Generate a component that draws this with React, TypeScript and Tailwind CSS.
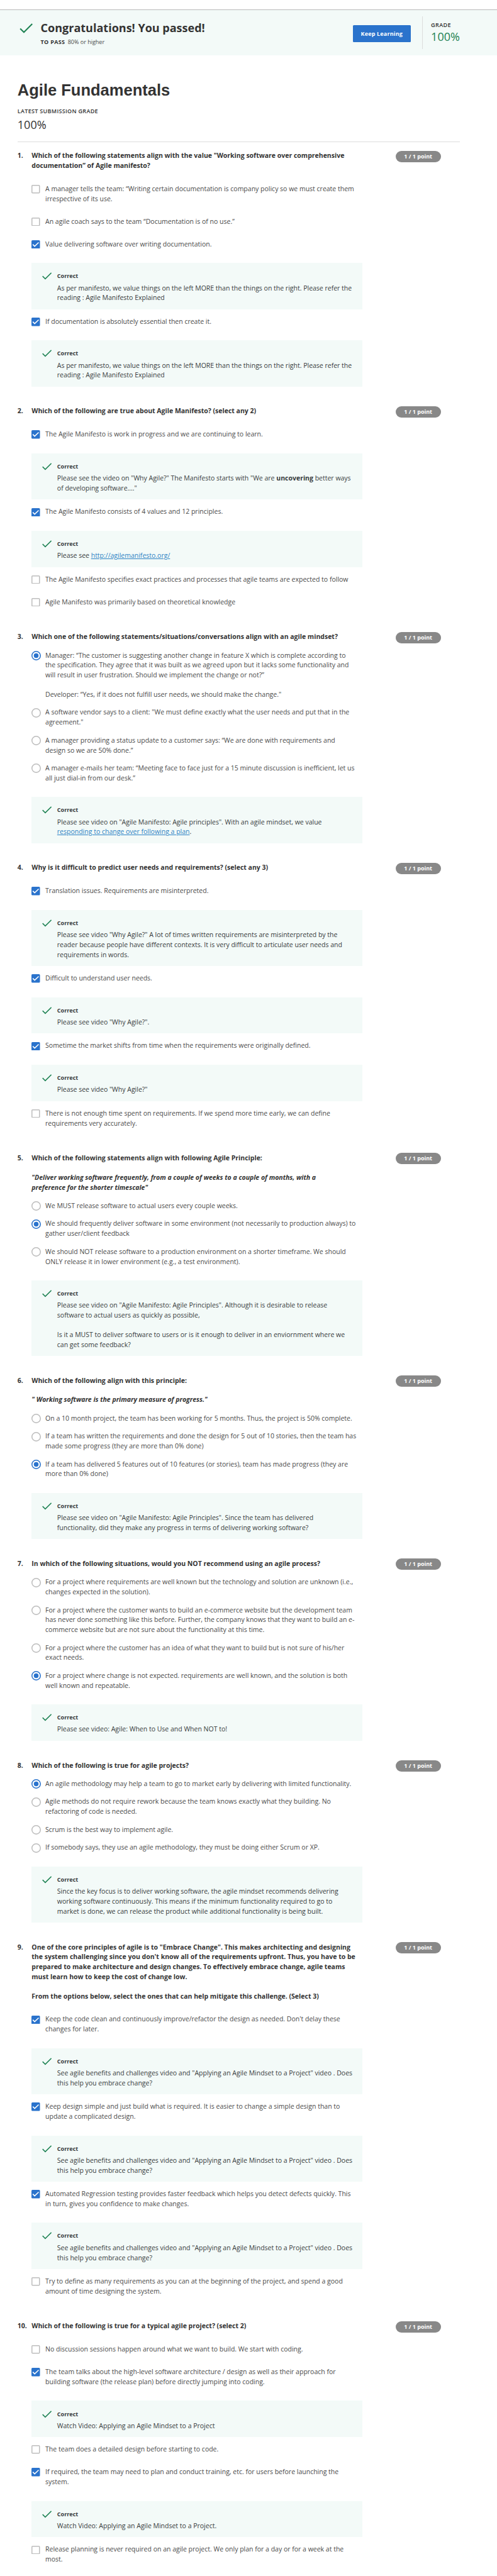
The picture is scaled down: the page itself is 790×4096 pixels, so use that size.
import React from "react";

type Option = {
  text: React.ReactNode;
  checked?: boolean;
  feedback?: React.ReactNode;
};

type Question = {
  kind: "checkbox" | "radio";
  title: React.ReactNode;
  options: Option[];
  feedback?: React.ReactNode;
};

const questions: Question[] = [
  {
    kind: "checkbox",
    title: 'Which of the following statements align with the value "Working software over comprehensive\ndocumentation” of Agile manifesto?',
    options: [
      { text: "A manager tells the team: “Writing certain documentation is company policy so we must create them\nirrespective of its use." },
      { text: "An agile coach says to the team “Documentation is of no use.”" },
      {
        text: "Value delivering software over writing documentation.",
        checked: true,
        feedback: "As per manifesto, we value things on the left MORE than the things on the right. Please refer the\nreading : Agile Manifesto Explained",
      },
      {
        text: "If documentation is absolutely essential then create it.",
        checked: true,
        feedback: "As per manifesto, we value things on the left MORE than the things on the right. Please refer the\nreading : Agile Manifesto Explained",
      },
    ],
  },
  {
    kind: "checkbox",
    title: "Which of the following are true about Agile Manifesto? (select any 2)",
    options: [
      {
        text: "The Agile Manifesto is work in progress and we are continuing to learn.",
        checked: true,
        feedback: (
          <>
            <p>
              {'Please see the video on "Why Agile?" The Manifesto starts with "We are '}
              <strong className="font-bold">uncovering</strong>
              {" better ways"}
            </p>
            <p>{'of developing software...."'}</p>
          </>
        ),
      },
      {
        text: "The Agile Manifesto consists of 4 values and 12 principles.",
        checked: true,
        feedback: (
          <>
            {"Please see "}
            <Link>http://agilemanifesto.org/</Link>
          </>
        ),
      },
      { text: "The Agile Manifesto specifies exact practices and processes that agile teams are expected to follow" },
      { text: "Agile Manifesto was primarily based on theoretical knowledge" },
    ],
  },
  {
    kind: "radio",
    title: "Which one of the following statements/situations/conversations align with an agile mindset?",
    options: [
      {
        text: (
          <>
            <p>{"Manager: “The customer is suggesting another change in feature X which is complete according to\nthe specification. They agree that it was built as we agreed upon but it lacks some functionality and\nwill result in user frustration. Should we implement the change or not?”"}</p>
            <p className="mt-[20px]">{'Developer: “Yes, if it does not fulfill user needs, we should make the change."'}</p>
          </>
        ),
        checked: true,
      },
      { text: 'A software vendor says to a client: "We must define exactly what the user needs and put that in the\nagreement."' },
      { text: "A manager providing a status update to a customer says: “We are done with requirements and\ndesign so we are 50% done.”" },
      { text: "A manager e-mails her team: “Meeting face to face just for a 15 minute discussion is inefficient, let us\nall just dial-in from our desk.”" },
    ],
    feedback: (
      <>
        <p>{'Please see video on "Agile Manifesto: Agile principles". With an agile mindset, we value'}</p>
        <p>
          <Link>responding to change over following a plan</Link>.
        </p>
      </>
    ),
  },
  {
    kind: "checkbox",
    title: "Why is it difficult to predict user needs and requirements? (select any 3)",
    options: [
      {
        text: "Translation issues. Requirements are misinterpreted.",
        checked: true,
        feedback: 'Please see video "Why Agile?" A lot of times written requirements are misinterpreted by the\nreader because people have different contexts. It is very difficult to articulate user needs and\nrequirements in words.',
      },
      { text: "Difficult to understand user needs.", checked: true, feedback: 'Please see video "Why Agile?".' },
      {
        text: "Sometime the market shifts from time when the requirements were originally defined.",
        checked: true,
        feedback: 'Please see video "Why Agile?"',
      },
      { text: "There is not enough time spent on requirements. If we spend more time early, we can define\nrequirements very accurately." },
    ],
  },
  {
    kind: "radio",
    title: (
      <>
        <p>Which of the following statements align with following Agile Principle:</p>
        <p className="mt-[20px] italic">{'"Deliver working software frequently, from a couple of weeks to a couple of months, with a\npreference for the shorter timescale"'}</p>
      </>
    ),
    options: [
      { text: "We MUST release software to actual users every couple weeks." },
      {
        text: "We should frequently deliver software in some environment (not necessarily to production always) to\ngather user/client feedback",
        checked: true,
      },
      { text: "We should NOT release software to a production environment on a shorter timeframe. We should\nONLY release it in lower environment (e.g., a test environment)." },
    ],
    feedback: (
      <>
        <p>{'Please see video on "Agile Manifesto: Agile Principles". Although it is desirable to release\nsoftware to actual users as quickly as possible,'}</p>
        <p className="mt-[20px]">{"Is it a MUST to deliver software to users or is it enough to deliver in an enviornment where we\ncan get some feedback?"}</p>
      </>
    ),
  },
  {
    kind: "radio",
    title: (
      <>
        <p>Which of the following align with this principle:</p>
        <p className="mt-[20px] italic">{'" Working software is the primary measure of progress."'}</p>
      </>
    ),
    options: [
      { text: "On a 10 month project, the team has been working for 5 months. Thus, the project is 50% complete." },
      { text: "If a team has written the requirements and done the design for 5 out of 10 stories, then the team has\nmade some progress (they are more than 0% done)" },
      {
        text: "If a team has delivered 5 features out of 10 features (or stories), team has made progress (they are\nmore than 0% done)",
        checked: true,
      },
    ],
    feedback: 'Please see video on "Agile Manifesto: Agile Principles". Since the team has delivered\nfunctionality, did they make any progress in terms of delivering working software?',
  },
  {
    kind: "radio",
    title: "In which of the following situations, would you NOT recommend using an agile process?",
    options: [
      { text: "For a project where requirements are well known but the technology and solution are unknown (i.e.,\nchanges expected in the solution)." },
      { text: "For a project where the customer wants to build an e-commerce website but the development team\nhas never done something like this before. Further, the company knows that they want to build an e-\ncommerce website but are not sure about the functionality at this time." },
      { text: "For a project where the customer has an idea of what they want to build but is not sure of his/her\nexact needs." },
      {
        text: "For a project where change is not expected. requirements are well known, and the solution is both\nwell known and repeatable.",
        checked: true,
      },
    ],
    feedback: "Please see video: Agile: When to Use and When NOT to!",
  },
  {
    kind: "radio",
    title: "Which of the following is true for agile projects?",
    options: [
      {
        text: "An agile methodology may help a team to go to market early by delivering with limited functionality.",
        checked: true,
      },
      { text: "Agile methods do not require rework because the team knows exactly what they building. No\nrefactoring of code is needed." },
      { text: "Scrum is the best way to implement agile." },
      { text: "If somebody says, they use an agile methodology, they must be doing either Scrum or XP." },
    ],
    feedback: "Since the key focus is to deliver working software, the agile mindset recommends delivering\nworking software continuously. This means if the minimum functionality required to go to\nmarket is done, we can release the product while additional functionality is being built.",
  },
  {
    kind: "checkbox",
    title: (
      <>
        <p>{'One of the core principles of agile is to "Embrace Change". This makes architecting and designing\nthe system challenging since you don\'t know all of the requirements upfront. Thus, you have to be\nprepared to make architecture and design changes. To effectively embrace change, agile teams\nmust learn how to keep the cost of change low.'}</p>
        <p className="mt-[20px]">From the options below, select the ones that can help mitigate this challenge. (Select 3)</p>
      </>
    ),
    options: [
      {
        text: "Keep the code clean and continuously improve/refactor the design as needed. Don't delay these\nchanges for later.",
        checked: true,
        feedback: 'See agile benefits and challenges video and "Applying an Agile Mindset to a Project" video . Does\nthis help you embrace change?',
      },
      {
        text: "Keep design simple and just build what is required. It is easier to change a simple design than to\nupdate a complicated design.",
        checked: true,
        feedback: 'See agile benefits and challenges video and "Applying an Agile Mindset to a Project" video . Does\nthis help you embrace change?',
      },
      {
        text: "Automated Regression testing provides faster feedback which helps you detect defects quickly. This\nin turn, gives you confidence to make changes.",
        checked: true,
        feedback: 'See agile benefits and challenges video and "Applying an Agile Mindset to a Project" video . Does\nthis help you embrace change?',
      },
      { text: "Try to define as many requirements as you can at the beginning of the project, and spend a good\namount of time designing the system." },
    ],
  },
  {
    kind: "checkbox",
    title: "Which of the following is true for a typical agile project? (select 2)",
    options: [
      { text: "No discussion sessions happen around what we want to build. We start with coding." },
      {
        text: "The team talks about the high-level software architecture / design as well as their approach for\nbuilding software (the release plan) before directly jumping into coding.",
        checked: true,
        feedback: "Watch Video: Applying an Agile Mindset to a Project",
      },
      { text: "The team does a detailed design before starting to code." },
      {
        text: "If required, the team may need to plan and conduct training, etc. for users before launching the\nsystem.",
        checked: true,
        feedback: "Watch Video: Applying an Agile Mindset to a Project.",
      },
      { text: "Release planning is never required on an agile project. We only plan for a day or for a week at the\nmost." },
    ],
  },
];

function Link({ children }: { children: React.ReactNode }) {
  return (
    <a href="#" className="text-[#2d82c4] underline">
      {children}
    </a>
  );
}

function Tick({ className }: { className: string }) {
  return (
    <svg viewBox="0 0 20 16" fill="none" stroke="currentColor" strokeWidth="2" className={className}>
      <path d="M0.9 8.2 L6.6 13.8 L19.4 1" />
    </svg>
  );
}

function Marker({ kind, checked }: { kind: "checkbox" | "radio"; checked?: boolean }) {
  if (kind === "radio") {
    return (
      <svg viewBox="0 0 20 20" fill="none" className="-ml-px mt-[0.5px] mr-[10px] size-[20px] shrink-0">
        <circle cx="10" cy="10" r="9" stroke={checked ? "#2a73cc" : "#bdbdbd"} strokeWidth="2" />
        {checked && <circle cx="10" cy="10" r="5" fill="#2a73cc" />}
      </svg>
    );
  }
  return (
    <svg viewBox="0 0 18 18" fill="none" className="mt-[1.5px] mr-[11px] size-[18px] shrink-0">
      {checked ? (
        <>
          <rect width="18" height="18" rx="2" fill="#2a73cc" />
          <path d="M2.8 8.8 L6.8 12.8 L15.3 4.6" stroke="#ffffff" strokeWidth="2" />
        </>
      ) : (
        <rect x="1" y="1" width="16" height="16" rx="1.2" stroke="#bdbdbd" strokeWidth="2" />
      )}
    </svg>
  );
}

function Feedback({ children }: { children: React.ReactNode }) {
  return (
    <div className="mt-[29px] flex w-[700px] bg-[#f3faf8] pt-[20px] pb-[13px] pl-[22px]">
      <Tick className="mr-[12px] h-[16px] w-[20px] shrink-0 text-[#1f8354]" />
      <div className="whitespace-pre text-[#373a3c]">
        <div className="text-[12px] leading-[16px] font-bold">Correct</div>
        <div className="mt-[7px]">{children}</div>
      </div>
    </div>
  );
}

function QuestionBlock({ index, question }: { index: number; question: Question }) {
  const { kind, title, options, feedback } = question;
  const endsWithFeedback = Boolean(feedback ?? options[options.length - 1].feedback);
  return (
    <li className={`flex items-start ${endsWithFeedback ? "pb-[42px]" : "pb-[53px]"}`}>
      <span className="w-[30px] shrink-0 font-bold text-[#333333]">{index}.</span>
      <div className="w-[770px] shrink-0">
        <h2 className="font-bold whitespace-pre text-[#333333]">{title}</h2>
        <ul className={kind === "checkbox" ? "mt-[28px]" : "mt-[18px]"}>
          {options.map((option, i) => {
            const previous = options[i - 1];
            const gap = !previous ? "" : previous.feedback ? "mt-[16px]" : kind === "checkbox" ? "mt-[27px]" : "mt-[17px]";
            return (
              <li key={i} className={gap}>
                <div className="flex items-start">
                  <Marker kind={kind} checked={option.checked} />
                  <div className="whitespace-pre text-[#4a4a4a]">{option.text}</div>
                </div>
                {option.feedback && <Feedback>{option.feedback}</Feedback>}
              </li>
            );
          })}
        </ul>
        {feedback && <Feedback>{feedback}</Feedback>}
      </div>
      <span className="-mt-px flex h-[24px] w-[96px] shrink-0 items-center justify-center rounded-[12px] bg-[#888888] text-[12px] font-bold text-white">
        1 / 1 point
      </span>
    </li>
  );
}

export default function App() {
  return (
    <div className="h-[5454px] w-[1052px] overflow-hidden bg-white font-['Open_Sans',sans-serif] text-[14px] leading-[21px] text-[#1f1f1f] [zoom:0.751]">
      <header className="mt-[20px] flex h-[97px] items-start border-t border-[#b9b9b9] bg-[#f3faf8] pl-[41px]">
        <Tick className="mt-[28.5px] mr-[17px] h-[22px] w-[28px] text-[#1f8354]" />
        <div className="w-[661px]">
          <h1 className="mt-[20px] text-[24px] leading-[36px] font-bold text-[#333333]">Congratulations! You passed!</h1>
          <p className="mt-[3px] text-[12px] leading-[18px]">
            <strong className="font-bold tracking-[0.4px] text-[#333333]">TO PASS</strong>
            <span className="ml-[6px] text-[#4a4a4a]">80% or higher</span>
          </p>
        </div>
        <button className="mt-[32px] h-[36px] w-[122px] rounded-[2px] bg-[#2a73cc] text-[12px] font-bold tracking-[0.24px] text-white">
          Keep Learning
        </button>
        <div className="mt-[13px] ml-[24px] h-[70px] border-l border-[#dddddd] pl-[18px]">
          <div className="mt-[9px] text-[12px] leading-[18px] font-semibold tracking-[0.5px] text-[#333333]">GRADE</div>
          <div className="mt-px text-[24px] leading-[30px] text-[#1f8354]">100%</div>
        </div>
      </header>
      <main className="pt-[50px] pl-[37px]">
        <h1 className="font-['Liberation_Sans',Arial,sans-serif] text-[34px] leading-[48px] font-bold text-[#333333]">Agile Fundamentals</h1>
        <div className="mt-[12px] text-[12px] leading-[18px] font-semibold tracking-[0.42px] text-[#333333]">LATEST SUBMISSION GRADE</div>
        <div className="mt-[3px] text-[24px] leading-[32px] text-[#333333]">100%</div>
        <div className="mt-[20px] w-[936px] border-t border-[#dddddd]" />
        <ol className="mt-[18.8px]">
          {questions.map((question, i) => (
            <QuestionBlock key={i} index={i + 1} question={question} />
          ))}
        </ol>
      </main>
    </div>
  );
}
